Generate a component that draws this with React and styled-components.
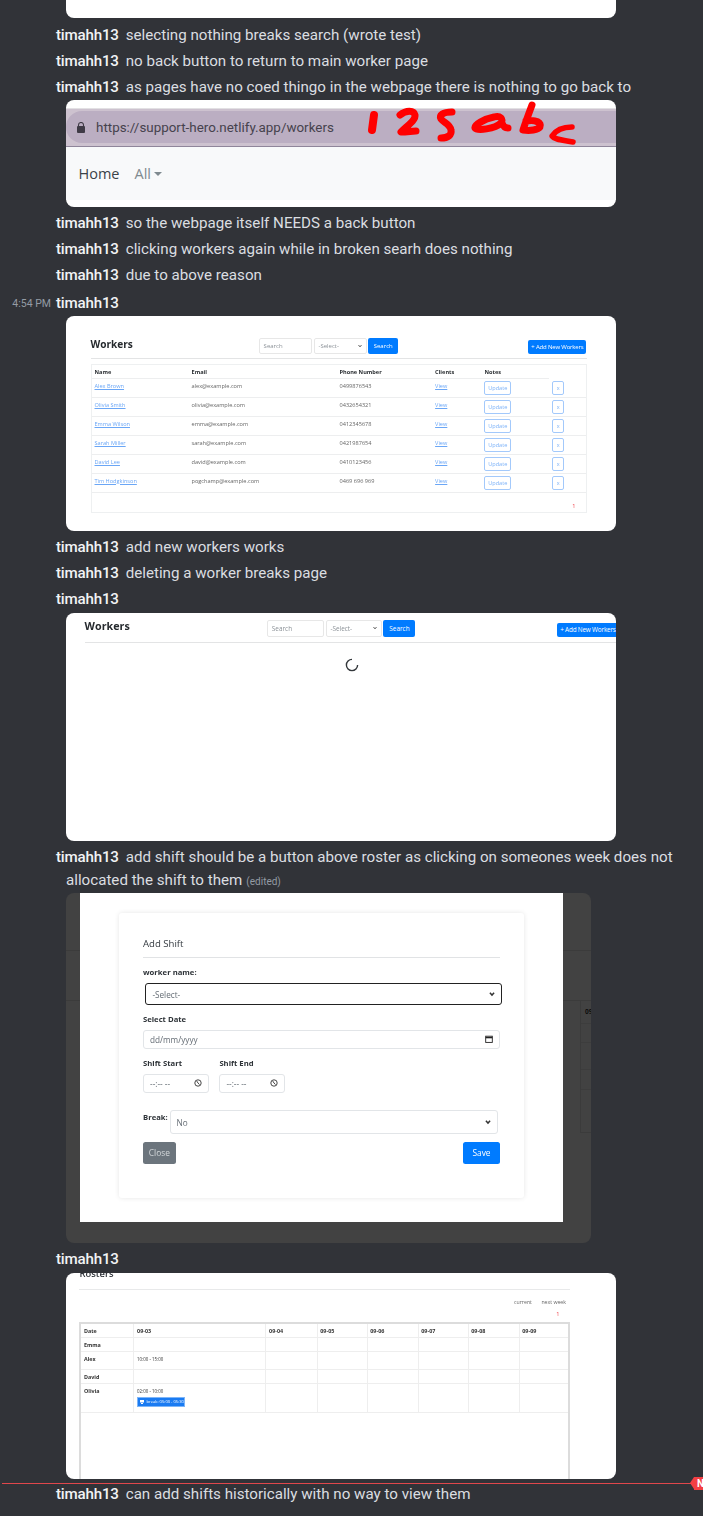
import React from "react";
import styled, { createGlobalStyle } from "styled-components";

const Global = createGlobalStyle`
  html, body { margin: 0; padding: 0; background: #313338; }
  * { box-sizing: border-box; }
`;

const Page = styled.div`
  width: 703px;
  height: 1516px;
  overflow: hidden;
  background: #313338;
  font-family: Roboto, "Noto Sans", sans-serif;
`;

const Message = styled.div`
  display: grid;
  grid-template-columns: 56px 1fr;
  height: 26px;
  line-height: 27px;
  margin-top: ${(p) => p.$mt || 0}px;
  font-size: 15.15px;
  color: #dbdee1;
  white-space: nowrap;
`;
const Gutter = styled.span`
  font-size: 10.5px;
  color: #949ba4;
  text-align: right;
  padding-right: 5px;
`;
const Name = styled.span`
  font-weight: 500;
  color: #f2f3f5;
  margin-right: 7px;
  letter-spacing: -0.2px;
`;
const WrappedMessage = styled.div`
  height: 49px;
  margin-top: 3px;
  padding: 1.5px 0 0 66px;
  text-indent: -10px;
  line-height: 23px;
  font-size: 15.15px;
  color: #dbdee1;
  white-space: nowrap;
`;
const Edited = styled.span`
  font-size: 10px;
  color: #949ba4;
  margin-left: 4px;
`;

const Attachment = styled.div`
  position: relative;
  width: ${(p) => p.$w || 550}px;
  height: ${(p) => p.$h}px;
  margin: ${(p) => p.$mt || 0}px 0 0 66px;
  border-radius: 8px;
  overflow: hidden;
  background: #fff;
`;
const Stub = styled(Attachment)`
  border-radius: 0 0 8px 8px;
`;
const Blurred = styled.div`
  height: 100%;
  color: #333;
  font-family: "Open Sans", sans-serif;
  filter: blur(${(p) => p.$b || 0.45}px);
`;

/* browser capture */
const ChromeStrip = styled.div`
  margin-top: 8px;
  height: 39px;
  padding-top: 2px;
  background: #cdc2cf;
  border-top: 1px solid #e2e0e3;
  border-bottom: 1px solid #8f859a;
`;
const AddressBar = styled.div`
  display: flex;
  align-items: center;
  height: 32px;
  padding-left: 11px;
  gap: 11px;
  background: #bbaec2;
  border-radius: 16px 0 0 16px;
  font-family: Roboto, sans-serif;
  font-size: 13.4px;
  color: #46424d;
`;
const NavBar = styled.div`
  display: flex;
  align-items: center;
  gap: 15px;
  height: 53px;
  padding-left: 12.5px;
  background: #f8f9fa;
  font-family: "Open Sans", sans-serif;
  font-size: 14.5px;
  color: #3b4248;
`;
const MutedNav = styled.span`
  display: flex;
  align-items: center;
  gap: 3px;
  color: #7f8a8f;
`;
const Caret = styled.span`
  width: 0;
  height: 0;
  border: 4px solid transparent;
  border-top-color: #7f8a8f;
  border-bottom: 0;
`;
const Scribble = styled.svg`
  position: absolute;
  left: 0;
  top: 0;
`;

/* workers page */
const Toolbar = styled.div`
  display: flex;
  justify-content: space-between;
  align-items: flex-start;
  font-size: ${(p) => p.$fs}px;
  margin: ${(p) => p.$top}px ${(p) => p.$right}px 0 ${(p) => p.$left}px;
  height: ${(p) => p.$h}em;
  border-bottom: 1px solid #e3e4e5;
`;
const PageTitle = styled.div`
  width: 6.4em;
  font-size: 1em;
  font-weight: 700;
  color: #262a2e;
  white-space: nowrap;
  & > span { font-size: 1.68em; line-height: 1.2; }
`;
const SearchGroup = styled.div`
  display: flex;
  gap: 0.25em;
`;
const SearchField = styled.div`
  display: flex;
  align-items: center;
  justify-content: space-between;
  width: ${(p) => p.$w}em;
  height: 2.65em;
  padding: 0 0.6em;
  background: #fff;
  border: 1px solid #e7e7e7;
  border-radius: 2px;
  color: #8b9197;
`;
const PrimaryButton = styled.div`
  display: flex;
  align-items: center;
  justify-content: center;
  flex: none;
  width: ${(p) => p.$w}em;
  height: ${(p) => p.$h || 2.65}em;
  margin-top: ${(p) => p.$mt || 0}em;
  background: #007bff;
  border-radius: 2px;
  color: #fff;
  white-space: nowrap;
  letter-spacing: ${(p) => p.$ls || 0}em;
`;

const Table = styled.div`
  margin: 4.5px 29.5px 0 24.5px;
  height: 149px;
  border: 1px solid #eef0f1;
  font-size: 5.6px;
`;
const TableRow = styled.div`
  display: grid;
  grid-template-columns: 97px 148px 95.6px 49.4px 68px 1fr;
  height: ${(p) => p.$h || 19}px;
  border-bottom: 1px solid ${(p) => (p.$head ? "transparent" : "#edeeef")};
  color: #666;
`;
const HeadCell = styled.div`
  padding: 3px 0 0 3px;
  font-weight: 700;
  line-height: 8px;
  color: #2b2f33;
  border-bottom: ${(p) => (p.$open ? "0" : "1px solid #edeeef")};
  height: 14px;
`;
const Cell = styled.div`
  padding: 3px 0 0 3px;
  line-height: 9px;
`;
const LinkCell = styled(Cell)`
  color: #6aa6f6;
  text-decoration: underline;
`;
const ActionCell = styled.div`
  padding: 2.5px 0 0 2.5px;
`;
const OutlineButton = styled.div`
  display: flex;
  align-items: center;
  justify-content: center;
  width: ${(p) => p.$w}px;
  height: 14px;
  border: 1px solid #a3c9fb;
  border-radius: 2px;
  color: #7cb2f8;
  font-size: 5.6px;
`;
const TableFooter = styled.div`
  height: 20px;
  padding: 9px 10px 0 0;
  text-align: right;
  color: #f0414a;
  font-size: 5.6px;
  line-height: 8px;
`;
const SpinnerWrap = styled.div`
  display: flex;
  justify-content: flex-start;
  padding: 15px 0 0 279px;
`;

/* modal capture */
const Backdrop = styled.div`
  display: flex;
  height: 100%;
  background: #424242;
  font-family: "Open Sans", sans-serif;
`;
const LeftStrip = styled.div`
  width: 14px;
  background:
    linear-gradient(#3b3b3b, #3b3b3b) 0 57px / 100% 1px no-repeat,
    linear-gradient(#3b3b3b, #3b3b3b) 0 107px / 100% 1px no-repeat;
`;
const RightStrip = styled.div`
  width: 28px;
  overflow: hidden;
  padding: 115px 0 0 22px;
  font-size: 6.5px;
  line-height: 8px;
  font-weight: 700;
  color: #0e0e0e;
  background:
    linear-gradient(#3b3b3b, #3b3b3b) 0 57px / 100% 1px no-repeat,
    linear-gradient(#3b3b3b, #3b3b3b) 0 107px / 100% 1px no-repeat,
    linear-gradient(#3b3b3b, #3b3b3b) 17px 107px / 1px 132px no-repeat,
    linear-gradient(#3d3d3d, #3d3d3d) 17px 130px / 11px 1px no-repeat,
    linear-gradient(#3d3d3d, #3d3d3d) 17px 149px / 11px 1px no-repeat,
    linear-gradient(#3d3d3d, #3d3d3d) 17px 176px / 11px 1px no-repeat,
    linear-gradient(#3d3d3d, #3d3d3d) 17px 196px / 11px 1px no-repeat,
    linear-gradient(#3b3b3b, #3b3b3b) 17px 239px / 11px 1px no-repeat;
`;
const ModalPaper = styled.div`
  width: 483px;
  height: 329px;
  padding: 20px 0 0 38.5px;
  background: #fff;
  filter: blur(0.3px);
`;
const ModalCard = styled.div`
  width: 405.5px;
  height: 285px;
  padding: 24px 24px 0 24.5px;
  border-radius: 3px;
  box-shadow: 0 0 5px rgba(0, 0, 0, 0.1);
  color: #333a40;
`;
const ModalTitle = styled.div`
  font-size: 9.6px;
  font-weight: 500;
  line-height: 13px;
  padding-bottom: 7px;
  border-bottom: 1px solid #e1e3e5;
  color: #343a40;
`;
const FieldLabel = styled.div`
  margin-top: ${(p) => p.$mt}px;
  font-size: 7.7px;
  font-weight: 700;
  line-height: 11px;
  color: #2e3338;
  white-space: nowrap;
`;
const Control = styled.div`
  display: flex;
  align-items: center;
  justify-content: space-between;
  flex: none;
  width: ${(p) => p.$w || 357}px;
  height: ${(p) => p.$h}px;
  margin-top: ${(p) => p.$mt || 0}px;
  margin-left: ${(p) => p.$ml || 0}px;
  padding: 0 ${(p) => p.$pr || 6}px 0 6px;
  border: ${(p) => (p.$focus ? "1.5px solid #222" : "1px solid #e2e5e8")};
  border-radius: 3px;
  font-size: 8.2px;
  color: #646c74;
  background: #fff;
`;
const TimeRow = styled.div`
  display: grid;
  grid-template-columns: 66px 66px;
  column-gap: 10.4px;
`;
const BreakRow = styled.div`
  display: flex;
  gap: 2px;
  margin-top: 17.5px;
`;
const BreakLabel = styled(FieldLabel)`
  width: 24.5px;
  margin-top: 1.5px;
`;
const ModalActions = styled.div`
  display: flex;
  justify-content: space-between;
  margin-top: 7.5px;
`;
const ModalButton = styled.div`
  display: flex;
  align-items: center;
  justify-content: center;
  width: ${(p) => p.$w}px;
  height: 22.7px;
  border-radius: 2.5px;
  font-size: 8.4px;
  color: ${(p) => (p.$grey ? "#d4d8db" : "#fff")};
  background: ${(p) => (p.$grey ? "#6c757d" : "#007bff")};
`;

/* roster */
const RosterTitle = styled.div`
  margin: -6.5px 0 0 13.5px;
  font-size: 9.4px;
  font-weight: 600;
  line-height: 14px;
  color: #30343a;
`;
const RosterRule = styled.div`
  margin: 8.5px 46px 0 13.3px;
  height: 1px;
  background: #e8e9ea;
`;
const WeekLinks = styled.div`
  display: flex;
  justify-content: flex-end;
  gap: 9.5px;
  margin: 7px 50px 0 0;
  font-size: 5.2px;
  line-height: 10px;
  color: #666;
`;
const RosterPage = styled.div`
  margin: 3px 56.5px 0 0;
  text-align: right;
  font-size: 5.6px;
  line-height: 8px;
  color: #f0414a;
`;
const RosterFrame = styled.div`
  margin: 3.7px 46px 0 13.3px;
  height: 160px;
  border: 2px solid #dcdcdc;
  border-bottom: 0;
`;
const RosterRow = styled.div`
  display: grid;
  grid-template-columns: 52.1px 132px 51.2px 50px 51px 50px 51px 1fr;
  height: ${(p) => p.$h}px;
  border-bottom: 1px solid #eeeeee;
  font-size: 5.4px;
  color: #333;
`;
const RosterCell = styled.div`
  padding: 4px 0 0 2.7px;
  line-height: 7px;
  font-size: ${(p) => (p.$small ? 4.4 : 5.4)}px;
  font-weight: ${(p) => (p.$bold ? 700 : 400)};
  border-left: ${(p) => (p.$first ? "0" : "1px solid #eeeeee")};
  white-space: nowrap;
`;
const BreakBadge = styled.div`
  display: flex;
  align-items: center;
  gap: 1.5px;
  width: 48px;
  height: 9.5px;
  margin-top: 2px;
  padding-left: 2px;
  background: #1a7bf2;
  border: 0.5px solid #7db5f8;
  color: #fff;
  font-size: 4.1px;
`;

/* new-messages divider */
const NewDivider = styled.div`
  position: relative;
  height: 1px;
  margin: 4px 0 -3px 2px;
  background: #e0474c;
`;
const NewBadge = styled.div`
  position: absolute;
  left: 692px;
  top: -6px;
  width: 40px;
  height: 13px;
  padding-left: 3px;
  background: #f23f43;
  border-radius: 0 3px 3px 0;
  font-size: 10px;
  line-height: 13px;
  font-weight: 700;
  color: #fff;
  &::before {
    content: "";
    position: absolute;
    left: -4px;
    top: 0;
    border: 6.5px solid transparent;
    border-left: 0;
    border-right: 4px solid #f23f43;
  }
`;

const Chevron = ({ size = 6, color = "#333" }) => (
  <svg width={size} height={size} viewBox="0 0 10 10" fill="none">
    <path d="M1.5 3 5 6.8 8.5 3" stroke={color} strokeWidth="2.4" />
  </svg>
);
const Lock = () => (
  <svg width="8" height="11" viewBox="0 0 8 11" fill="#3f3b46">
    <rect y="4" width="8" height="7" rx="1" />
    <path d="M1.5 4.5V3a2.5 2.5 0 0 1 5 0v1.5" fill="none" stroke="#3f3b46" strokeWidth="1.1" />
  </svg>
);
const CalendarIcon = () => (
  <svg width="8" height="8" viewBox="0 0 8 8" fill="none" stroke="#222">
    <rect x="0.7" y="1.2" width="6.6" height="6.2" strokeWidth="0.9" />
    <path d="M0.7 2.6h6.6" strokeWidth="1.4" />
  </svg>
);
const ClockIcon = () => (
  <svg width="8" height="8" viewBox="0 0 8 8" fill="none" stroke="#333" strokeWidth="0.9">
    <circle cx="4" cy="4" r="3.2" />
    <path d="M2.7 2 4 4l1.5 1.6" />
  </svg>
);
const Spinner = () => (
  <svg width="14" height="14" viewBox="0 0 14 14" fill="none">
    <path d="M12.6 7A5.6 5.6 0 1 1 7 1.4" stroke="#33373b" strokeWidth="1.4" />
  </svg>
);
const Coffee = () => (
  <svg width="5" height="4" viewBox="0 0 5 4" fill="#fff">
    <path d="M0 0h4v2.4H0zM1 3h2v1H1z" />
  </svg>
);

const People = [
  ["Alex Brown", "alex@example.com", "0499876543"],
  ["Olivia Smith", "olivia@example.com", "0432654321"],
  ["Emma Wilson", "emma@example.com", "0412345678"],
  ["Sarah Miller", "sarah@example.com", "0421987654"],
  ["David Lee", "david@example.com", "0410123456"],
  ["Tim Hodgkinson", "pogchamp@example.com", "0469 696 969"],
];
const Days = ["09-04", "09-05", "09-06", "09-07", "09-08", "09-09"];

const Msg = ({ children, time, mt }) => (
  <Message $mt={mt}>
    <Gutter>{time}</Gutter>
    <span>
      <Name>timahh13</Name>
      {children}
    </span>
  </Message>
);

const WorkerBar = ({ fs, top, left, right, addWidth, h }) => (
  <Toolbar $fs={fs} $top={top} $left={left} $right={right} $h={h}>
    <PageTitle><span>Workers</span></PageTitle>
    <SearchGroup>
      <SearchField $w={8.9}>Search</SearchField>
      <SearchField $w={8.8}>-Select-<Chevron size={4} /></SearchField>
      <PrimaryButton $w={5}>Search</PrimaryButton>
    </SearchGroup>
    <PrimaryButton $w={addWidth} $h={2.3} $mt={0.4} $ls={-0.03}>+ Add New Workers</PrimaryButton>
  </Toolbar>
);

const EmptyDays = () => Days.map((d) => <RosterCell key={d} />);

export default function App() {
  return (
    <Page>
      <Global />
      <Stub $h={18} />
      <Msg mt={4}>selecting nothing breaks search (wrote test)</Msg>
      <Msg>no back button to return to main worker page</Msg>
      <Msg>as pages have no coed thingo in the webpage there is nothing to go back to</Msg>

      <Attachment $h={107}>
        <ChromeStrip>
          <AddressBar>
            <Lock />
            <span>https://support-hero.netlify.app/workers</span>
          </AddressBar>
        </ChromeStrip>
        <NavBar>
          <span>Home</span>
          <MutedNav>All <Caret /></MutedNav>
        </NavBar>
        <Scribble width="550" height="60" viewBox="0 0 550 60" fill="none" stroke="#ff0000" strokeWidth="7" strokeLinecap="round" strokeLinejoin="round">
          <path d="M308 15l-2 15" strokeWidth="8" />
          <path d="M334 15c6-5 14-5 15 0 1 5-8 11-14 17 6 0 11-1 15-1" />
          <path d="M386 12c-9 0-13 3-11 7 3 4 9 5 10 11 1 5-3 8-10 8" />
          <path d="M428 17c-10 2-20 8-19 11 2 3 20 1 26-5 3-4-1-8-7-6zM436 23c1 3 3 5 6 5" />
          <path d="M466 5c-3 8-6 16-9 25 7 1 15 0 17-3 2-4-4-8-14-6" />
          <path d="M506 27c-8 0-16 3-20 9 3 4 11 4 21 6" strokeWidth="5.5" />
        </Scribble>
      </Attachment>

      <Msg mt={3}>so the webpage itself NEEDS a back button</Msg>
      <Msg>clicking workers again while in broken searh does nothing</Msg>
      <Msg>due to above reason</Msg>
      <Msg mt={2} time="4:54 PM" />

      <Attachment $h={215}>
        <Blurred>
          <WorkerBar fs={6} top={22} left={24.5} right={29.5} addWidth={9.7} h={3.5} />
          <Table>
            <TableRow $head $h={14}>
              <HeadCell>Name</HeadCell>
              <HeadCell>Email</HeadCell>
              <HeadCell>Phone Number</HeadCell>
              <HeadCell>Clients</HeadCell>
              <HeadCell>Notes</HeadCell>
              <HeadCell $open />
            </TableRow>
            {People.map(([name, mail, phone]) => (
              <TableRow key={name}>
                <LinkCell>{name}</LinkCell>
                <Cell>{mail}</Cell>
                <Cell>{phone}</Cell>
                <LinkCell>View</LinkCell>
                <ActionCell><OutlineButton $w={27.5}>Update</OutlineButton></ActionCell>
                <ActionCell><OutlineButton $w={12.5}>x</OutlineButton></ActionCell>
              </TableRow>
            ))}
            <TableFooter>1</TableFooter>
          </Table>
        </Blurred>
      </Attachment>

      <Msg mt={3}>add new workers works</Msg>
      <Msg>deleting a worker breaks page</Msg>
      <Msg />

      <Attachment $h={228} $mt={1}>
        <Blurred>
          <WorkerBar fs={6.4} top={7} left={18.6} right={-3} addWidth={9.7} h={3.65} />
          <SpinnerWrap><Spinner /></SpinnerWrap>
        </Blurred>
      </Attachment>

      <WrappedMessage>
        <Name>timahh13</Name>
        add shift should be a button above roster as clicking on someones week does not
        <br />
        allocated the shift to them<Edited>(edited)</Edited>
      </WrappedMessage>

      <Attachment $h={350} $w={525}>
        <Backdrop>
          <LeftStrip />
          <ModalPaper>
            <ModalCard>
              <ModalTitle>Add Shift</ModalTitle>
              <FieldLabel $mt={9}>worker name:</FieldLabel>
              <Control $focus $h={22} $w={356.5} $mt={5} $ml={2.4}>
                -Select-<Chevron />
              </Control>
              <FieldLabel $mt={9.3}>Select Date</FieldLabel>
              <Control $h={19.5} $mt={4.3}>dd/mm/yyyy<CalendarIcon /></Control>
              <TimeRow>
                <FieldLabel $mt={9}>Shift Start</FieldLabel>
                <FieldLabel $mt={9}>Shift End</FieldLabel>
                <Control $w={66} $h={19} $mt={4.8}>--:-- --<ClockIcon /></Control>
                <Control $w={66} $h={19} $mt={4.8}>--:-- --<ClockIcon /></Control>
              </TimeRow>
              <BreakRow>
                <BreakLabel $mt={0}>Break:</BreakLabel>
                <Control $w={328.5} $h={23.7}>No<Chevron /></Control>
              </BreakRow>
              <ModalActions>
                <ModalButton $grey $w={32.7}>Close</ModalButton>
                <ModalButton $w={37}>Save</ModalButton>
              </ModalActions>
            </ModalCard>
          </ModalPaper>
          <RightStrip>09</RightStrip>
        </Backdrop>
      </Attachment>

      <Msg mt={3} />

      <Attachment $h={206} $mt={1}>
        <Blurred $b={0.35}>
          <RosterTitle>Rosters</RosterTitle>
          <RosterRule />
          <WeekLinks><span>current</span><span>next week</span></WeekLinks>
          <RosterPage>1</RosterPage>
          <RosterFrame>
            <RosterRow $h={14.5}>
              <RosterCell $first $bold>Date</RosterCell>
              <RosterCell $bold>09-03</RosterCell>
              {Days.map((d) => <RosterCell key={d} $bold>{d}</RosterCell>)}
            </RosterRow>
            <RosterRow $h={14}>
              <RosterCell $first $bold>Emma</RosterCell>
              <RosterCell />
              <EmptyDays />
            </RosterRow>
            <RosterRow $h={18}>
              <RosterCell $first $bold>Alex</RosterCell>
              <RosterCell $small>10:00 - 15:00</RosterCell>
              <EmptyDays />
            </RosterRow>
            <RosterRow $h={14}>
              <RosterCell $first $bold>David</RosterCell>
              <RosterCell />
              <EmptyDays />
            </RosterRow>
            <RosterRow $h={29}>
              <RosterCell $first $bold>Olivia</RosterCell>
              <RosterCell $small>
                02:00 - 10:00
                <BreakBadge><Coffee />break: 05:00 - 05:30</BreakBadge>
              </RosterCell>
              <EmptyDays />
            </RosterRow>
          </RosterFrame>
        </Blurred>
      </Attachment>

      <NewDivider><NewBadge>NEW</NewBadge></NewDivider>
      <Msg>can add shifts historically with no way to view them</Msg>
    </Page>
  );
}
